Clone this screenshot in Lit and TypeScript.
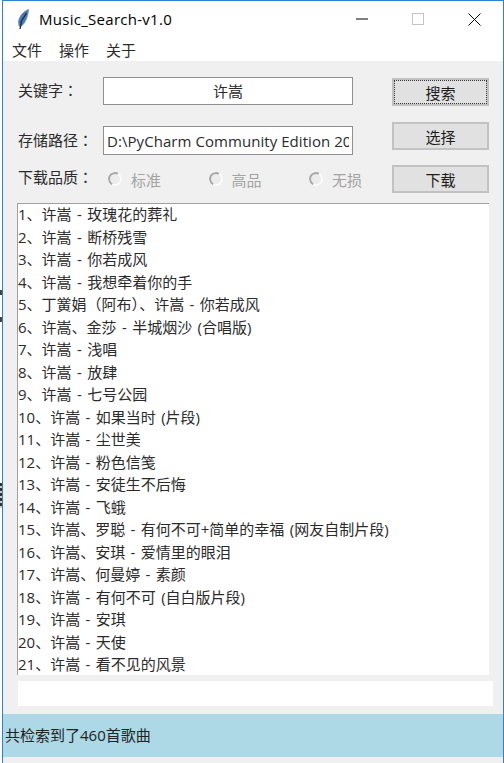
import { LitElement, html, css } from "lit";
import { customElement } from "lit/decorators.js";

const SONGS = [
  "1、许嵩 - 玫瑰花的葬礼",
  "2、许嵩 - 断桥残雪",
  "3、许嵩 - 你若成风",
  "4、许嵩 - 我想牵着你的手",
  html`5、丁黉娟<span class="tc">（</span>阿布<span class="tc">）</span>、许嵩 - 你若成风`,
  "6、许嵩、金莎 - 半城烟沙 (合唱版)",
  "7、许嵩 - 浅唱",
  "8、许嵩 - 放肆",
  "9、许嵩 - 七号公园",
  "10、许嵩 - 如果当时 (片段)",
  "11、许嵩 - 尘世美",
  "12、许嵩 - 粉色信笺",
  "13、许嵩 - 安徒生不后悔",
  "14、许嵩 - 飞蛾",
  "15、许嵩、罗聪 - 有何不可+简单的幸福 (网友自制片段)",
  "16、许嵩、安琪 - 爱情里的眼泪",
  "17、许嵩、何曼婷 - 素颜",
  "18、许嵩 - 有何不可 (自白版片段)",
  "19、许嵩 - 安琪",
  "20、许嵩 - 天使",
  "21、许嵩 - 看不见的风景",
];

@customElement("app-root")
export class AppRoot extends LitElement {
  static styles = css`
    :host {
      display: flex;
      width: 504px;
      height: 763px;
      overflow: hidden;
      background: #fff;
      font-family: "Open Sans", "Noto Sans CJK SC", sans-serif;
      font-size: 15px;
      color: #2b2b2b;
    }

    .strip {
      width: 2px;
      flex: none;
      padding-top: 290px;
    }

    .strip i {
      display: block;
      height: 5px;
      margin-bottom: 22px;
      background: #444;
    }

    .strip i.long {
      height: 25px;
      margin-top: 161px;
      background: repeating-linear-gradient(#333 0 3px, #ccc 3px 5px);
    }

    .window {
      flex: 1;
      height: 763px;
      box-sizing: border-box;
      border: 1px solid #2b84d2;
      border-bottom: none;
      background: #f0f0f0;
      display: flex;
      flex-direction: column;
    }

    .titlebar {
      height: 36px;
      flex: none;
      background: #fff;
      display: flex;
      align-items: center;
      padding-left: 11px;
      color: #000;
    }

    .title {
      margin-left: 4px;
      font-size: 15px;
      letter-spacing: 0.28px;
    }

    .controls {
      margin-left: auto;
      display: flex;
      align-items: center;
    }

    .control {
      width: 56.5px;
      height: 36px;
      display: flex;
      align-items: center;
      justify-content: center;
    }

    .menubar {
      height: 24px;
      flex: none;
      background: #fff;
      display: flex;
      gap: 17px;
      padding-left: 9px;
      align-items: center;
    }

    .form {
      flex: none;
      height: 142px;
      display: flex;
      padding: 16px 14px 0 15px;
      box-sizing: border-box;
    }

    .fields {
      flex: 1;
      min-width: 0;
      display: flex;
      flex-direction: column;
    }

    .field {
      display: flex;
      align-items: center;
    }

    .field.first {
      height: 28px;
    }

    .field.second {
      height: 29px;
      margin-top: 21px;
    }

    .field.third {
      height: 26px;
      margin-top: 9px;
    }

    .label {
      width: 85px;
      flex: none;
      padding-bottom: 2px;
    }

    .first .label {
      padding-bottom: 4px;
    }

    .tc {
      font-family: "Noto Sans CJK TC", sans-serif;
    }

    .entry {
      width: 250px;
      height: 100%;
      box-sizing: border-box;
      border: 1px solid #8f8f8f;
      background: #fff;
      padding: 0 3px;
      display: flex;
      align-items: center;
    }

    .entry.center {
      justify-content: center;
      padding-bottom: 2px;
    }

    .path {
      flex: 1;
      overflow: hidden;
      white-space: nowrap;
      letter-spacing: 0.06px;
    }

    .radios {
      display: flex;
      gap: 47.5px;
      margin: 4px 0 0 5px;
    }

    .radio {
      display: flex;
      align-items: center;
      gap: 9px;
      color: #a3a3a3;
    }

    .dot {
      width: 14px;
      height: 14px;
      box-sizing: border-box;
      border-radius: 50%;
      border: 2px solid;
      border-color: #a8a8a8 #fafafa #fafafa #a8a8a8;
      background: #ececec;
      transform: rotate(-15deg);
    }

    .buttons {
      width: 97px;
      flex: none;
      display: flex;
      flex-direction: column;
      gap: 16px;
      padding-top: 1px;
    }

    .button {
      height: 28px;
      box-sizing: border-box;
      border: 2px solid #c2c2c2;
      background: #e1e1e1;
      color: #1c1c1c;
      display: flex;
      align-items: center;
      justify-content: center;
      position: relative;
    }

    .button.last {
      margin-top: -1px;
    }

    .button.focused::after {
      content: "";
      position: absolute;
      inset: 0;
      border: 1px dotted #333;
    }

    .list {
      flex: none;
      margin-left: 14px;
      width: 472px;
      height: 472px;
      box-sizing: border-box;
      background: #fff;
      border-top: 1px solid #a0a0a0;
      border-left: 1px solid #a0a0a0;
      overflow: hidden;
    }

    .rows {
      margin-top: -1px;
      word-spacing: 1.5px;
    }

    .row {
      height: 22.5px;
      line-height: 22.5px;
      white-space: nowrap;
    }

    .blank {
      flex: none;
      height: 25px;
      width: 475px;
      margin: 6px 0 0 15px;
      background: #fff;
    }

    .status {
      flex: none;
      height: 43px;
      box-sizing: border-box;
      margin-top: 8px;
      background: #add8e6;
      display: flex;
      align-items: center;
      padding: 0 0 2px 2px;
      color: #222;
    }
  `;

  render() {
    return html`
      <div class="strip"><i></i><i></i><i class="long"></i></div>
      <div class="window">
        <div class="titlebar">
          <svg width="21" height="23" viewBox="0 0 21 23">
            <path d="M14.5 1.5 C10 3 5 8 4.5 14 L5 18 L7.5 18 C11.5 15 14 8 14.5 1.5 Z" fill="#3f7cc4" stroke="#7d8a98" stroke-width="0.8" />
            <path d="M12.5 5 L7.5 13 L6 21" fill="none" stroke="#1f2b38" stroke-width="1.3" />
          </svg>
          <span class="title">Music_Search-v1.0</span>
          <div class="controls">
            <div class="control">
              <svg width="12" height="2" viewBox="0 0 12 2"><path d="M0 1H12" stroke="#000" /></svg>
            </div>
            <div class="control">
              <svg width="12" height="12" viewBox="0 0 12 12"><rect x="0.5" y="0.5" width="11" height="11" fill="none" stroke="#c4c4c4" /></svg>
            </div>
            <div class="control">
              <svg width="13" height="13" viewBox="0 0 13 13"><path d="M0.5 0.5L12.5 12.5M12.5 0.5L0.5 12.5" stroke="#000" /></svg>
            </div>
          </div>
        </div>
        <div class="menubar"><span>文件</span><span>操作</span><span>关于</span></div>
        <div class="form">
          <div class="fields">
            <div class="field first">
              <span class="label">关键字<span class="tc">：</span></span>
              <div class="entry center">许嵩</div>
            </div>
            <div class="field second">
              <span class="label">存储路径<span class="tc">：</span></span>
              <div class="entry"><div class="path">D:\\PyCharm Community Edition 2018.1</div></div>
            </div>
            <div class="field third">
              <span class="label">下载品质<span class="tc">：</span></span>
              <div class="radios">
                <div class="radio"><i class="dot"></i>标准</div>
                <div class="radio"><i class="dot"></i>高品</div>
                <div class="radio"><i class="dot"></i>无损</div>
              </div>
            </div>
          </div>
          <div class="buttons">
            <div class="button focused">搜索</div>
            <div class="button">选择</div>
            <div class="button last">下载</div>
          </div>
        </div>
        <div class="list">
          <div class="rows">
            ${SONGS.map((s) => html`<div class="row">${s}</div>`)}
          </div>
        </div>
        <div class="blank"></div>
        <div class="status">共检索到了460首歌曲</div>
      </div>
    `;
  }
}

declare global {
  interface HTMLElementTagNameMap {
    "app-root": AppRoot;
  }
}
